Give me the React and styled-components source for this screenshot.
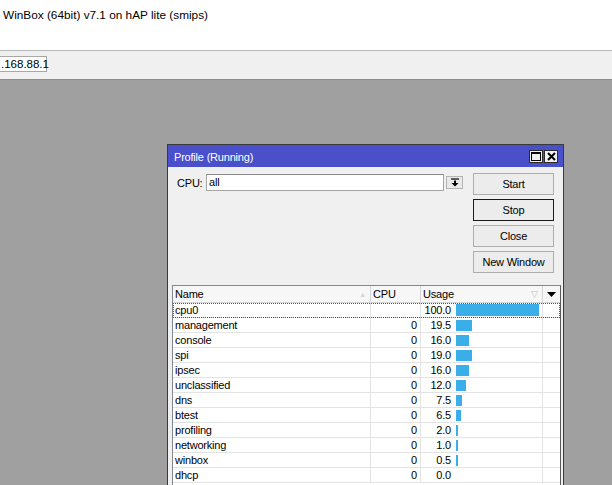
import React from 'react'
import styled, { createGlobalStyle } from 'styled-components'

const GlobalStyle = createGlobalStyle`
  html, body {
    margin: 0;
    padding: 0;
  }
  body {
    width: 612px;
    height: 485px;
    overflow: hidden;
    font-family: "Liberation Sans", Arial, sans-serif;
    color: #000;
  }
`

const processes = [
  { name: 'cpu0', cpu: '', usage: 100.0 },
  { name: 'management', cpu: '0', usage: 19.5 },
  { name: 'console', cpu: '0', usage: 16.0 },
  { name: 'spi', cpu: '0', usage: 19.0 },
  { name: 'ipsec', cpu: '0', usage: 16.0 },
  { name: 'unclassified', cpu: '0', usage: 12.0 },
  { name: 'dns', cpu: '0', usage: 7.5 },
  { name: 'btest', cpu: '0', usage: 6.5 },
  { name: 'profiling', cpu: '0', usage: 2.0 },
  { name: 'networking', cpu: '0', usage: 1.0 },
  { name: 'winbox', cpu: '0', usage: 0.5 },
  { name: 'dhcp', cpu: '0', usage: 0.0 },
]

const BAR_MAX = 83

// small values still get a visible sliver, like winbox does it
const barWidth = usage => (usage > 0 ? Math.max(2, Math.round((usage / 100) * BAR_MAX)) : 0)

const App = () => {
  return (
    <Screen>
      <GlobalStyle />
      <AppTitle>WinBox (64bit) v7.1 on hAP lite (smips)</AppTitle>
      <Toolbar>
        <Address>.168.88.1</Address>
      </Toolbar>
      <Desktop>
        <Window>
          <TitleBar>
            <span>Profile (Running)</span>
            <TitleButtons>
              <TitleBtn>
                <svg width="10" height="9" viewBox="0 0 10 9">
                  <rect x="0.5" y="0.5" width="9" height="8" fill="none" stroke="#000" />
                  <line x1="0" y1="1.5" x2="10" y2="1.5" stroke="#000" />
                </svg>
              </TitleBtn>
              <TitleBtn>
                <svg width="9" height="9" viewBox="0 0 9 9">
                  <path d="M1 1 L8 8 M8 1 L1 8" stroke="#000" strokeWidth="2" />
                </svg>
              </TitleBtn>
            </TitleButtons>
          </TitleBar>
          <Body>
            <TopSection>
              <FormRow>
                <Label>CPU:</Label>
                <Input>all</Input>
                <DropBtn>
                  <svg width="8" height="9" viewBox="0 0 8 9">
                    <line x1="0" y1="1" x2="8" y2="1" stroke="#000" strokeWidth="1.2" />
                    <path d="M3 2.5 H5 V5 H7.5 L4 8.5 L0.5 5 H3 Z" fill="#000" />
                  </svg>
                </DropBtn>
              </FormRow>
              <ButtonColumn>
                <Button>Start</Button>
                <Button $focused>Stop</Button>
                <Button>Close</Button>
                <Button>New Window</Button>
              </ButtonColumn>
            </TopSection>

            <Table>
              <HeaderRow>
                <HeadCell>
                  Name
                  <SortMark>▲</SortMark>
                </HeadCell>
                <HeadCell>CPU</HeadCell>
                <HeadCell>
                  Usage
                  <FilterMark>▽</FilterMark>
                </HeadCell>
                <HeadCell $center>
                  <svg width="9" height="5" viewBox="0 0 9 5">
                    <path d="M0 0 H9 L4.5 5 Z" fill="#000" />
                  </svg>
                </HeadCell>
              </HeaderRow>
              {processes.map((p, i) => (
                <Row key={p.name} $selected={i === 0}>
                  <Cell>{p.name}</Cell>
                  <Cell $right>{p.cpu}</Cell>
                  <UsageCell>
                    <UsageValue>{p.usage.toFixed(1)}</UsageValue>
                    <Bar $tall={i === 0} style={{ width: barWidth(p.usage) + 'px' }} />
                  </UsageCell>
                  <Cell />
                </Row>
              ))}
            </Table>
          </Body>
        </Window>
      </Desktop>
    </Screen>
  )
}

const Screen = styled.div`
  display: flex;
  flex-direction: column;
  width: 612px;
  height: 485px;
`

const AppTitle = styled.div`
  height: 50px;
  background: #fff;
  padding: 8px 0 0 3px;
  box-sizing: border-box;
  font-size: 11.8px;
  line-height: 14px;
`

const Toolbar = styled.div`
  height: 30px;
  box-sizing: border-box;
  background: #f0f0f0;
  border-top: 1px solid #b9b9b9;
  border-bottom: 1px solid #8e8e8e;
  padding-top: 5px;
`

const Address = styled.div`
  width: 47px;
  height: 16px;
  box-sizing: border-box;
  background: #fff;
  border: 1px solid #a8a8a8;
  border-left: none;
  font-size: 11.5px;
  line-height: 14px;
  padding-left: 1px;
`

const Desktop = styled.div`
  position: relative;
  flex: 1;
  background: #a0a0a0;
  overflow: hidden;
`

const Window = styled.div`
  position: absolute;
  left: 167px;
  top: 64px;
  width: 397px;
  height: 420px;
  box-sizing: border-box;
  border: 1px solid #3a3a3a;
  background: #f0f0f0;
  display: flex;
  flex-direction: column;
  font-size: 11px;
  letter-spacing: -0.2px;
`

const TitleBar = styled.div`
  height: 22px;
  background: #4a50c9;
  color: #fff;
  display: flex;
  align-items: center;
  justify-content: space-between;
  padding: 1px 5px 0 6px;
  box-sizing: border-box;
  font-size: 11px;
`

const TitleButtons = styled.div`
  display: flex;
  gap: 1px;
`

const TitleBtn = styled.div`
  width: 14px;
  height: 13px;
  box-sizing: border-box;
  background: #f0f0f0;
  border: 1px solid #2b2b2b;
  display: flex;
  align-items: center;
  justify-content: center;
`

const Body = styled.div`
  flex: 1;
  padding: 6px 2px 0 4px;
  display: flex;
  flex-direction: column;
`

const TopSection = styled.div`
  display: flex;
  align-items: flex-start;
`

const FormRow = styled.div`
  display: flex;
  align-items: center;
  margin: 1px 0 0 5px;
`

const Label = styled.div`
  width: 29px;
`

const Input = styled.div`
  width: 238px;
  height: 17px;
  box-sizing: border-box;
  background: #fff;
  border: 1px solid #a5a5a5;
  border-top-color: #8a8a8a;
  padding-left: 2px;
  line-height: 15px;
`

const DropBtn = styled.div`
  width: 17px;
  height: 13px;
  margin-left: 2px;
  box-sizing: border-box;
  background: #e9e9e9;
  border: 1px solid #b5b5b5;
  display: flex;
  align-items: center;
  justify-content: center;
`

const ButtonColumn = styled.div`
  display: flex;
  flex-direction: column;
  gap: 4px;
  margin: 0 7px 0 auto;
`

const Button = styled.div`
  width: 81px;
  height: 22px;
  box-sizing: border-box;
  background: #ececec;
  border: 1px solid ${p => (p.$focused ? '#1a1a1a' : '#adadad')};
  display: flex;
  align-items: center;
  justify-content: center;
  font-size: 11px;
`

const Table = styled.div`
  margin-top: 12px;
  border: 1px solid #828790;
  border-right-color: #5a5a5a;
  background: #fff;
  flex: 1;
`

const gridCols = `
  display: grid;
  grid-template-columns: 198px 50px 122px 1fr;
`

const HeaderRow = styled.div`
  ${gridCols}
  height: 16px;
  background: #f7f7f7;
  border-bottom: 1px solid #d5d5d5;
`

const HeadCell = styled.div`
  display: flex;
  align-items: center;
  justify-content: ${p => (p.$center ? 'center' : 'flex-start')};
  padding-left: ${p => (p.$center ? '0' : '2px')};
  border-right: 1px solid #d5d5d5;
  &:last-child {
    border-right: none;
  }
`

const SortMark = styled.span`
  margin-left: auto;
  margin-right: 4px;
  font-size: 7px;
  color: #d6d6d6;
`

const FilterMark = styled.span`
  margin-left: auto;
  margin-right: 4px;
  font-size: 9px;
  color: #bdbdbd;
`

const Row = styled.div`
  ${gridCols}
  height: 15px;
  box-sizing: border-box;
  border-bottom: 1px solid #e3e3e3;
  outline: ${p => (p.$selected ? '1px dotted #555' : 'none')};
  outline-offset: -1px;
`

const Cell = styled.div`
  padding: 0 ${p => (p.$right ? '3px' : '0')} 0 2px;
  text-align: ${p => (p.$right ? 'right' : 'left')};
  line-height: 14px;
  border-right: 1px solid #e3e3e3;
  white-space: nowrap;
  overflow: hidden;
  &:last-child {
    border-right: none;
  }
`

const UsageCell = styled.div`
  display: flex;
  align-items: center;
  border-right: 1px solid #e3e3e3;
`

const UsageValue = styled.span`
  width: 30px;
  text-align: right;
  line-height: 14px;
`

const Bar = styled.div`
  height: ${p => (p.$tall ? '12px' : '11px')};
  margin-left: 5px;
  background: #3aaee8;
`

export default App
